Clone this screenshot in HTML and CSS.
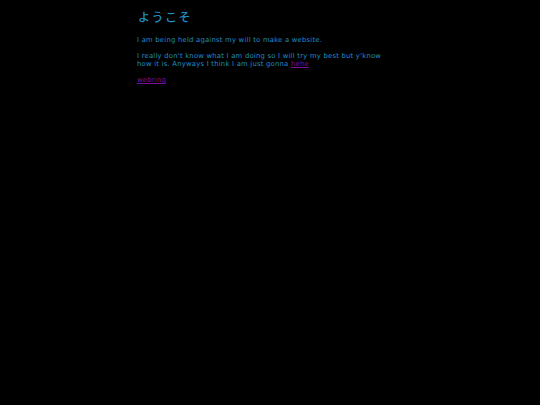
FILE: index.html
```html
<!DOCTYPE html>
<html>
<head>
<meta charset="utf-8">
<link rel="stylesheet" href="styles.css">
</head>
<body>
<main class="page">
<h1 class="title">ようこそ</h1>
<p class="text">I am being held against my will to make a website.</p>
<p class="text">I really don't know what I am doing so I will try my best but y'know how it is. Anyways I think I am just gonna <a class="link" href="#">hehe</a></p>
<p class="text"><a class="link" href="#">webring</a></p>
</main>
</body>
</html>
```
FILE: styles.css
```css
html, body {
  margin: 0;
  padding: 0;
  background: #000;
}
body {
  height: 405px;
}
.page {
  box-sizing: border-box;
  width: 266px;
  margin: 0 auto;
  padding: 9px 10px 0 0;
  color: #1f8fc4;
  font-family: "DejaVu Sans", "Noto Sans CJK JP", sans-serif;
}
.title {
  margin: 0 0 11px 1px;
  font-family: "Noto Sans CJK JP", sans-serif;
  font-size: 12px;
  font-weight: 500;
  line-height: 16px;
  letter-spacing: 1.5px;
}
.text {
  margin: 0 0 8px 0;
  font-size: 6.8px;
  line-height: 8px;
  letter-spacing: 0.24px;
}
.link {
  color: #7a0fa0;
  text-decoration: underline;
}
```
